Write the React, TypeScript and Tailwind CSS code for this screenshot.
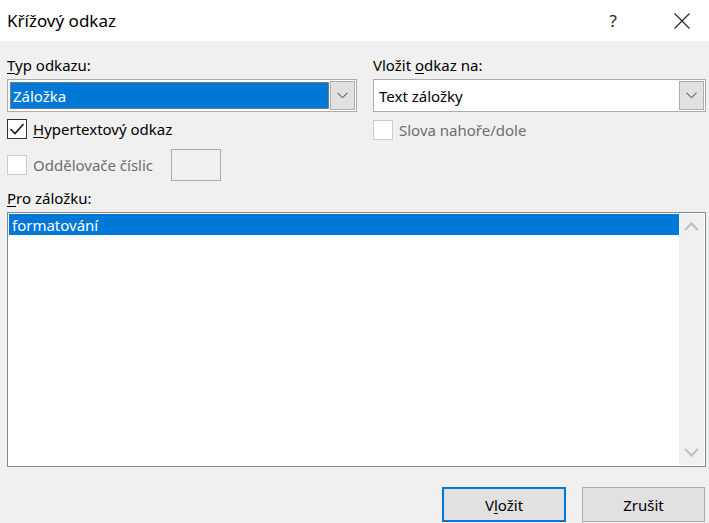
import React, { useState } from 'react'

const font = { fontFamily: '"Noto Sans", "Open Sans", sans-serif' }

// small chevron drawn inside combo buttons
const ComboChevron = () => (
  <svg width="11" height="7" viewBox="0 0 11 7" fill="none">
    <path d="M0.5 0.8 L5.5 5.8 L10.5 0.8" stroke="#333" strokeWidth="1" />
  </svg>
)

const ScrollArrow = ({ up }: { up?: boolean }) => (
  <svg width="15" height="9" viewBox="0 0 15 9" fill="none">
    <path
      d={up ? 'M1 8 L7.5 1.5 L14 8' : 'M1 1 L7.5 7.5 L14 1'}
      stroke="#c2c2c2"
      strokeWidth="2.4"
    />
  </svg>
)

const Check = () => (
  <svg width="16" height="14" viewBox="0 0 16 14" fill="none">
    <path d="M1.5 7 L6 11.5 L14.5 2" stroke="#1a1a1a" strokeWidth="1.6" />
  </svg>
)

interface CheckboxProps {
  label: React.ReactNode
  checked?: boolean
  disabled?: boolean
}

const Checkbox: React.FC<CheckboxProps> = ({ label, checked, disabled }) => (
  <div className="flex items-center gap-[6px] h-[20px]">
    <span
      className={`flex h-[20px] w-[20px] items-center justify-center border bg-white ${
        disabled ? 'border-[#cccccc]' : 'border-[#333333]'
      }`}
    >
      {checked && <Check />}
    </span>
    <span className={disabled ? 'text-[#6d6d6d]' : 'text-black'}>{label}</span>
  </div>
)

interface ComboProps {
  value: string
  focused?: boolean
}

const Combo: React.FC<ComboProps> = ({ value, focused }) => (
  <div className="flex h-[33px] w-full items-stretch border border-[#adadad] bg-white p-px">
    <div className="flex flex-1 items-stretch p-px">
      {focused ? (
        <div className="flex flex-1 items-center border border-dotted border-[#c8884a] bg-[#0078d7] pl-[2px] text-white">
          {value}
        </div>
      ) : (
        <div className="flex flex-1 items-center pl-[3px] text-black">{value}</div>
      )}
    </div>
    <div className="flex w-[25px] items-center justify-center border border-[#adadad] bg-[#e1e1e1]">
      <ComboChevron />
    </div>
  </div>
)

export default function App() {
  const [selected] = useState('formatování')

  return (
    <div className="h-[523px] w-[709px] overflow-hidden bg-[#f0f0f0] text-[15px] leading-[20px]" style={font}>
      {/* Title bar */}
      <div className="flex h-[41px] items-center bg-white pl-[7px]">
        <span className="flex-1 text-[17px] text-black">Křížový odkaz</span>
        <span className="mr-[57px] text-[17px] text-[#222]">?</span>
        <svg width="16" height="16" viewBox="0 0 16 16" className="mr-[19px]">
          <path d="M0.5 0.5 L15.5 15.5 M15.5 0.5 L0.5 15.5" stroke="#222" strokeWidth="1.1" />
        </svg>
      </div>

      <div className="pl-[7px] pr-[3px] pt-[14px]">
        <div className="flex gap-[16px]">
          {/* Left column */}
          <div className="flex w-[350px] flex-col">
            <div className="mb-[4px] text-black">
              <span className="underline underline-offset-2">T</span>yp odkazu:
            </div>
            <Combo value="Záložka" focused />
            <div className="mt-[7px]">
              <Checkbox
                checked
                label={
                  <>
                    <span className="underline underline-offset-2">H</span>ypertextový odkaz
                  </>
                }
              />
            </div>
            <div className="mt-[10px] flex h-[32px] items-center gap-[18px]">
              <Checkbox disabled label="Oddělovače číslic" />
              <div className="h-[32px] w-[50px] border border-[#adadad] bg-[#f0f0f0]" />
            </div>
          </div>

          {/* Right column */}
          <div className="flex flex-1 flex-col">
            <div className="mb-[4px] text-black">
              Vložit <span className="underline underline-offset-2">o</span>dkaz na:
            </div>
            <Combo value="Text záložky" />
            <div className="mt-[8px]">
              <Checkbox disabled label="Slova nahoře/dole" />
            </div>
          </div>
        </div>

        <div className="mb-[4px] mt-[7px] text-black">
          <span className="underline underline-offset-2">P</span>ro záložku:
        </div>

        {/* Bookmark list */}
        <div className="flex h-[255px] border border-[#828790] bg-white p-px">
          <div className="flex-1">
            <div className="flex h-[21px] items-center bg-[#0078d7] pl-[3px] text-white">{selected}</div>
          </div>
          <div className="flex w-[25px] flex-col items-center justify-between bg-[#f0f0f0] py-[8px]">
            <ScrollArrow up />
            <ScrollArrow />
          </div>
        </div>

        {/* Dialog buttons */}
        <div className="mt-[20px] flex justify-end gap-[16px] pr-px">
          <button className="h-[35px] w-[124px] border-2 border-[#0078d7] bg-[#e1e1e1] text-black">
            V<span className="underline underline-offset-2">l</span>ožit
          </button>
          <button className="h-[35px] w-[123px] border border-[#adadad] bg-[#e1e1e1] text-black">
            Zrušit
          </button>
        </div>
      </div>
    </div>
  )
}
